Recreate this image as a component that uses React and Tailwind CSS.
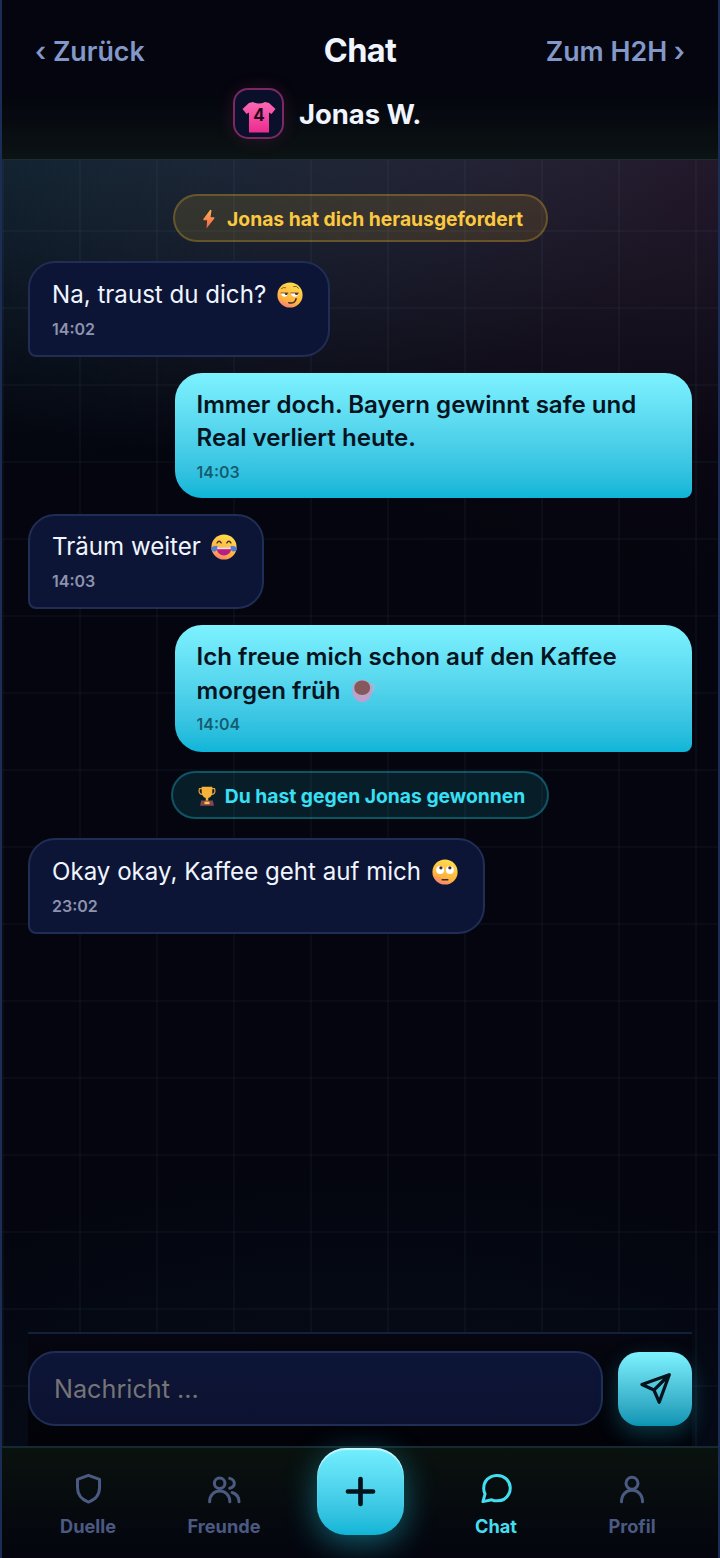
import React from 'react';

const NAV_ICON = 'h-[36px] w-[36px]';

const strokeProps = {
  viewBox: '0 0 24 24',
  fill: 'none',
  stroke: 'currentColor',
  strokeWidth: 2,
  strokeLinecap: 'round',
  strokeLinejoin: 'round'
};

const ShieldIcon = () => (
  <svg {...strokeProps} className={NAV_ICON}>
    <path d="M12.3 2.9 L19.7 5.6 V11 C19.7 16 16.5 19.2 12.3 20.7 C8.1 19.2 5 16 5 11 V5.6 Z" />
  </svg>
);

const FriendsIcon = () => (
  <svg {...strokeProps} className={NAV_ICON}>
    <circle cx="9.1" cy="8.2" r="3.5" />
    <path d="M2.4 20.5 C2.4 11 15.9 11 15.9 20.5 M15.8 4.9 C19.9 6 19.9 10.5 15.8 11.5 M17.4 14.3 C20.3 15.2 22 17.3 22 20.5" />
  </svg>
);

const ChatIcon = () => (
  <svg {...strokeProps} className={NAV_ICON}>
    <path d="M21.5 11.4a8.38 8.38 0 0 1-.9 3.8 8.5 8.5 0 0 1-7.6 4.7 8.38 8.38 0 0 1-3.8-.7L3.3 20.4l1.4-5.1a8.38 8.38 0 0 1-.9-3.8 8.5 8.5 0 0 1 4.7-7.6 8.38 8.38 0 0 1 3.8-.9h.7a8.48 8.48 0 0 1 8.5 8v.4z" />
  </svg>
);

const ProfileIcon = () => (
  <svg {...strokeProps} className={NAV_ICON}>
    <circle cx="12" cy="8.2" r="4" />
    <path d="M5 20.5 C5 10.3 19 10.3 19 20.5" />
  </svg>
);

const Face = ({ children }) => (
  <svg viewBox="0 0 32 32" className="mr-[3px] ml-[10.5px] inline-block h-[26px] w-[26px] align-[-5px]">
    <defs>
      <linearGradient id="face" x1="0.7" y1="0" x2="0.3" y2="1">
        <stop offset="0" stopColor="#ffdf4d" />
        <stop offset="0.7" stopColor="#ffb23e" />
        <stop offset="1" stopColor="#f47c78" />
      </linearGradient>
    </defs>
    <circle cx="16" cy="16" r="15.5" fill="url(#face)" />
    {children}
  </svg>
);

const SmirkFace = () => (
  <Face>
    <path d="M5 13.5 H13.5 C13.5 19.5 5 19.5 5 13.5 M17 13.5 H26.5 C26.5 19.5 17 19.5 17 13.5" fill="#fff" />
    <path d="M9.5 13.5 H13.3 C13.3 17 9.5 17 9.5 13.5 M22 13.5 H26 C26 17 22 17 22 13.5" fill="#402a32" />
    <path d="M5 13.5 H13.5 M17 13.5 H26.5 M5.5 8 Q8 6 10.5 7 M20.5 5.5 Q24 4 26.5 7.5" fill="none" stroke="#7a4a2c" strokeWidth="1.1" strokeLinecap="round" />
    <path d="M14.5 25.5 Q22.5 27 23.5 20.5" fill="none" stroke="#402a32" strokeWidth="1.9" strokeLinecap="round" />
  </Face>
);

const JoyFace = () => (
  <Face>
    <path d="M7 17 H25 C25 29.5 7 29.5 7 17" fill="#bb1d80" />
    <path d="M7.5 16.5 H24.5 V18.7 H7.5 Z" fill="#f4e6f2" />
    <path d="M7.5 11 Q10 7 12.5 11 M19.5 11 Q22 7 24.5 11" fill="none" stroke="#402a32" strokeWidth="1.7" strokeLinecap="round" />
    <path d="M7.5 14.5 Q8.5 21 4.5 21.5 Q-0.5 21.5 0.5 17.5 Q2 14.5 7.5 14.5 M24.5 14.5 Q23.5 21 27.5 21.5 Q32.5 21.5 31.5 17.5 Q30 14.5 24.5 14.5" fill="#5478d8" />
  </Face>
);

const RollFace = () => (
  <Face>
    <circle cx="10" cy="13.5" r="4.9" fill="#fff" />
    <circle cx="22" cy="13.5" r="4.9" fill="#fff" />
    <circle cx="11" cy="10.8" r="2" fill="#402a32" />
    <circle cx="22" cy="10.8" r="2" fill="#402a32" />
    <path d="M12.500 25.500 H19.500" stroke="#402a32" strokeWidth="1.7" strokeLinecap="round" />
  </Face>
);

const Coffee = () => (
  <svg viewBox="0 0 32 32" className="ml-[10px] inline-block h-[26px] w-[26px] align-[-5px]">
    <path d="M25 8 Q31.500 7 29.500 13 Q28 17 24 18.500" fill="none" stroke="#c5acd0" strokeWidth="1.8" />
    <path d="M3 14 C2 34 26 36 27.500 14 Z" fill="#b9a2cf" />
    <ellipse cx="15" cy="13" rx="12" ry="11" fill="#c0a3c4" />
    <ellipse cx="15" cy="12" rx="9.800" ry="9" fill="#85585b" />
  </svg>
);

const Bolt = () => (
  <svg viewBox="0 0 32 32" className="h-[20px] w-[20px]">
    <defs>
      <linearGradient id="bolt" x1="0" y1="0" x2="0" y2="1">
        <stop offset="0" stopColor="#ffb550" />
        <stop offset="1" stopColor="#f45b50" />
      </linearGradient>
    </defs>
    <path d="M18 1 L7 16 Q6 18 8.5 18 H13 L12 31 L24.5 15 Q25.5 13 23 13 H18.5 L20 2 Z" fill="url(#bolt)" />
  </svg>
);

const Trophy = () => (
  <svg viewBox="0 0 32 32" className="h-[20px] w-[20px]">
    <path d="M8 4 H4 Q1 13 10 14 M24 4 H28 Q31 13 22 14" fill="none" stroke="#e79a37" strokeWidth="2" />
    <path d="M7.5 1 H24.5 V9 Q24.5 17 18 19 V24 H14 V19 Q7.5 17 7.5 9 Z" fill="#f5b33c" />
    <path d="M6.5 23 H25.5 L27 31.5 H5 Z" fill="#85464e" />
    <path d="M12 25 H20 V29 H12 Z" fill="#ffc34c" />
  </svg>
);

const Jersey = () => (
  <svg viewBox="0 0 34 34" className="h-[34px] w-[34px]">
    <defs>
      <linearGradient id="jersey" x1="0" y1="0" x2="0" y2="1">
        <stop offset="0" stopColor="#fb69b3" />
        <stop offset="1" stopColor="#eb2b91" />
      </linearGradient>
    </defs>
    <path d="M11 2 Q17 5 23 2 L27 3 L33.5 9 L29.5 14 L27 12.5 V32.5 H7 V12.5 L4.5 14 L0.5 9 L7 3 Z" fill="url(#jersey)" />
    <text x="17" y="20.5" textAnchor="middle" fontFamily="Inter, sans-serif" fontSize="17" fontWeight="700" fill="#1d0718">4</text>
  </svg>
);

const messages = [
  { kind: 'challenge', text: 'Jonas hat dich herausgefordert' },
  { kind: 'in', text: 'Na, traust du dich?', emoji: SmirkFace, time: '14:02' },
  { kind: 'out', text: 'Immer doch. Bayern gewinnt safe und Real verliert heute.', time: '14:03' },
  { kind: 'in', text: 'Träum weiter', emoji: JoyFace, time: '14:03' },
  { kind: 'out', text: 'Ich freue mich schon auf den Kaffee morgen früh', emoji: Coffee, time: '14:04', tall: true },
  { kind: 'win', text: 'Du hast gegen Jonas gewonnen' },
  { kind: 'in', text: 'Okay okay, Kaffee geht auf mich', emoji: RollFace, time: '23:02' }
];

const eventStyles = {
  challenge: 'border-[#fbbf24]/25 bg-[#fbbf24]/12 text-[#fbc941] w-[375px]',
  win: 'border-[#22d3ee]/30 bg-[#22d3ee]/12 text-[#37e0f5] w-[378px]'
};

const EventPill = ({ kind, text }) => (
  <div className={`my-[3px] flex h-[48px] items-center justify-center gap-[8px] self-center rounded-full border-2 pt-[2px] pl-[2px] text-[19.3px] font-bold ${eventStyles[kind]}`}>
    {kind === 'challenge' ? <Bolt /> : <Trophy />}
    <span>{text}</span>
  </div>
);

const Bubble = ({ kind, text, emoji: Emoji, time, tall }) => {
  const incoming = kind === 'in';
  return (
    <div
      className={
        incoming
          ? 'h-[95.5px] self-start rounded-[27px] rounded-bl-[8px] border-2 border-[#202d55] bg-[#0d1536] px-[22px] pt-[14.5px] text-[#f0f5ff]'
          : `w-[517.5px] self-end rounded-[27px] rounded-br-[8px] bg-linear-to-b from-[#7df2ff] to-[#0cb5d8] px-[22px] pt-[15px] font-semibold text-[#04141f] ${tall ? 'h-[127px]' : 'h-[125px]'}`
      }
    >
      <p className={incoming ? 'text-[24.1px] leading-[34px]' : 'text-[24.1px] leading-[33.7px]'}>
        {text}
        {Emoji && <Emoji />}
      </p>
      <p className={`mt-[5px] text-[16px] leading-[24px] font-semibold ${incoming ? 'text-[#8c93ad]' : 'text-[#04141f]/60'}`}>{time}</p>
    </div>
  );
};

const NavItem = ({ icon: Icon, label, active }) => (
  <button className={`flex w-[136px] flex-col items-center pt-[23px] ${active ? 'text-[#43def0]' : 'text-[#4b5a82]'}`}>
    <Icon />
    <span className="mt-[7px] text-[18.2px] leading-[24px] font-bold">{label}</span>
  </button>
);

export default function App() {
  return (
    <div className="relative flex h-[1558px] w-[720px] flex-col overflow-hidden border-x-2 border-[#1b2c55] bg-[#04050e] font-[Inter,sans-serif]">
      {/* Ambient glow and grid */}
      <div className="absolute inset-0 bg-[radial-gradient(ellipse_720px_400px_at_0%_80px,rgba(34,211,238,0.11),transparent),radial-gradient(ellipse_800px_500px_at_100%_90px,rgba(236,72,153,0.08),transparent),radial-gradient(ellipse_900px_370px_at_60%_100px,rgba(130,140,180,0.19),transparent),radial-gradient(ellipse_700px_400px_at_50%_1558px,rgba(14,80,120,0.16),transparent)]" />
      <div className="absolute inset-0 bg-[linear-gradient(to_right,rgba(130,180,220,0.045)_2px,transparent_2px),linear-gradient(to_bottom,rgba(130,180,220,0.04)_2px,transparent_2px)] bg-[size:77px_77px] bg-[position:0_-1px]" />

      <header className="relative h-[160px] shrink-0 border-b border-[#1d2934] bg-linear-to-b from-[#04050e] from-55% to-[#0c1313] px-[33px] pt-[32px]">
        <div className="grid h-[38px] grid-cols-3 items-center text-[26.8px] leading-[38px] font-semibold text-[#8298c8]">
          <span>‹ Zurück</span>
          <h1 className="text-center text-[32.5px] leading-[38px] font-bold tracking-[-0.7px] text-[#f0f5ff]">Chat</h1>
          <span className="text-right">Zum H2H ›</span>
        </div>
        <div className="mt-[18px] ml-[198px] flex items-center gap-[16px]">
          <div className="flex h-[51px] w-[51px] items-center justify-center rounded-[15px] border-2 border-[#7c2864] bg-[#0a1029] pt-[6px] shadow-[0_0_18px_rgba(236,72,153,0.14)]">
            <Jersey />
          </div>
          <span className="-ml-[1px] pt-[2px] text-[27.4px] font-bold text-[#f0f5ff]">Jonas W.</span>
        </div>
      </header>

      <main className="relative flex flex-1 flex-col px-[26px] pt-[31px]">
        <div className="flex flex-1 flex-col gap-[16px]">
          {messages.map((message, index) =>
            message.kind === 'in' || message.kind === 'out' ? (
              <Bubble key={index} {...message} />
            ) : (
              <EventPill key={index} {...message} />
            )
          )}
        </div>

        <div className="flex h-[114px] shrink-0 gap-[15px] border-t-2 border-[#10203d] bg-linear-to-b from-[#05060f] to-[#020208] pt-[17px]">
          <input
            placeholder="Nachricht ..."
            className="h-[75px] w-[575px] rounded-[27px] border-2 border-[#202d55] bg-linear-to-b from-[#0d1538] to-[#0c1230] px-[24px] text-[25.2px] text-white placeholder:text-[#757575]"
          />
          <button className="mt-[1px] flex h-[74px] w-[74px] items-center justify-center rounded-[21px] bg-linear-to-b from-[#7df2ff] to-[#0795b3] text-[#03131d] shadow-[0_8px_22px_rgba(34,211,238,0.25)]">
            <svg {...strokeProps} strokeWidth="2.2" className="h-[36px] w-[36px]">
              <path d="M21.5 2.5 L3.3 9 L11.3 12.7 L14.8 20.8 Z M11.3 12.7 L21.5 2.5" />
            </svg>
          </button>
        </div>
      </main>

      <nav className="relative flex h-[112px] shrink-0 justify-center border-t-2 border-[#142a33] bg-linear-to-b from-[#0a120e] to-[#04050e]">
        <NavItem icon={ShieldIcon} label="Duelle" />
        <NavItem icon={FriendsIcon} label="Freunde" />
        <div className="flex w-[136px] justify-center">
          <button className="flex h-[87px] w-[87px] items-center justify-center rounded-[29px] bg-linear-to-b from-[#73efff] to-[#0eb5d7] text-[#03131d] shadow-[0_8px_32px_rgba(34,211,238,0.42),inset_0_2px_1px_rgba(255,255,255,0.6)]">
            <svg {...strokeProps} strokeWidth="2.6" className="h-[43px] w-[43px]">
              <path d="M12 5 V19 M5 12 H19" />
            </svg>
          </button>
        </div>
        <NavItem icon={ChatIcon} label="Chat" active />
        <NavItem icon={ProfileIcon} label="Profil" />
      </nav>
    </div>
  );
}
